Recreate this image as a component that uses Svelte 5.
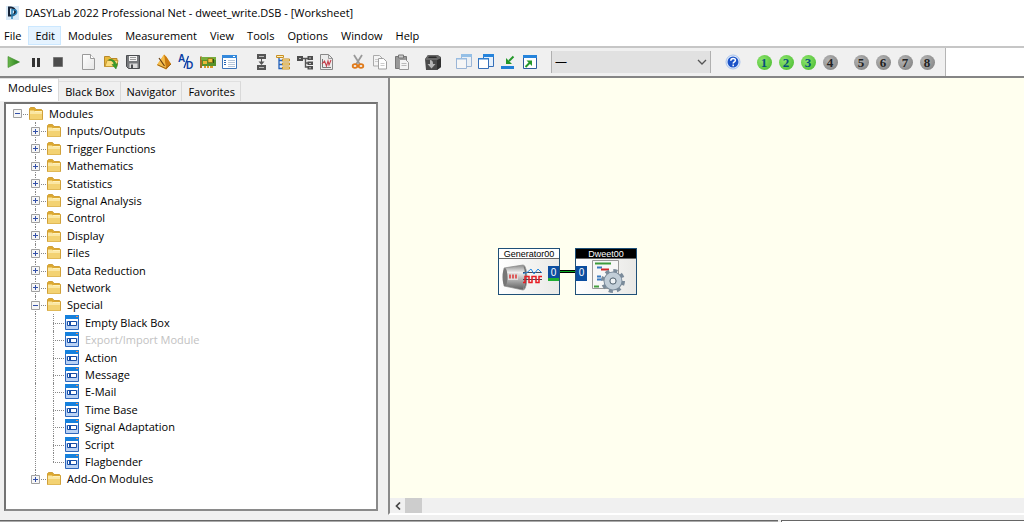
<script>
  const menus = ['File', 'Edit', 'Modules', 'Measurement', 'View', 'Tools', 'Options', 'Window', 'Help'];
  const tabs = ['Modules', 'Black Box', 'Navigator', 'Favorites'];
  const toolGroups = [
    [['play', 'Start'], ['pause', 'Pause'], ['stop', 'Stop']],
    [['new', 'New'], ['open', 'Open'], ['save', 'Save']],
    [['metronome', 'Experiment setup'], ['ad', 'A/D'], ['card', 'Hardware'], ['props', 'Properties']],
    [['flow', 'Flow'], ['outline', 'Outline'], ['network', 'Network'], ['chart', 'Chart']],
    [['cut', 'Cut'], ['copy', 'Copy'], ['paste', 'Paste']],
    [['blackbox', 'Black box']],
    [['windowsPale', 'Hide windows'], ['windows', 'Show windows'], ['minimize', 'Minimize'], ['maximize', 'Maximize']]
  ];
  const layouts = [[1, 2, 3, 4], [5, 6, 7, 8]];
  const used = [1, 2, 3];
  const folder = (label, extra = {}) => ({ label, level: 1, kind: 'folder', sign: '+', ...extra });
  const leaf = (label, extra = {}) => ({ label, level: 2, kind: 'leaf', ...extra });
  const rows = [
    { label: 'Modules', level: 0, kind: 'folder', sign: '-' },
    ...['Inputs/Outputs', 'Trigger Functions', 'Mathematics', 'Statistics', 'Signal Analysis', 'Control', 'Display', 'Files', 'Data Reduction', 'Network'].map((l) => folder(l)),
    folder('Special', { sign: '-' }),
    leaf('Empty Black Box'),
    leaf('Export/Import Module', { disabled: true }),
    ...['Action', 'Message', 'E-Mail', 'Time Base', 'Signal Adaptation', 'Script'].map((l) => leaf(l)),
    leaf('Flagbender', { last: true }),
    folder('Add-On Modules', { last: true })
  ];
  let activeTab = $state('Modules');
</script>

{#snippet icon(name)}
  <svg width="16" height="16" viewBox="0 0 16 16" aria-hidden="true">
    {#if name === 'play'}
      <path d="M2 2.5 13.5 8 2 13.5z" fill="url(#gPlay)" stroke="#3c8a2a" stroke-width=".6" />
    {:else if name === 'pause'}
      <path d="M4 4h3v9H4zM9 4h3v9H9z" fill="#333" />
    {:else if name === 'stop'}
      <path d="M3.500 3.500h9v9h-9z" fill="#4c4c4c" stroke="#777" />
    {:else if name === 'new'}
      <path d="M1.500 .5h8l4 4v11h-12z" fill="url(#gPaper)" stroke="#9a9a9a" />
      <path d="M9.500 .5v4h4" fill="#fff" stroke="#9a9a9a" />
    {:else if name === 'open'}
      <path d="M1.500 12.500V2.500h5l1.500 2h6v8z" fill="#e8b93c" stroke="#b8892a" />
      <path d="M2 12.500 4 6.500h11l-1.500 6z" fill="#fbdc7c" stroke="#c79a35" />
      <path d="M5.500 6c3 0 5 1.500 5.500 4.500H9l4 4.500 1.500-5.500-1.500.7C12.500 7 9.500 4.500 5.500 6z" fill="#3aa02c" stroke="#23781c" stroke-width=".5" />
    {:else if name === 'save'}
      <path d="M1.500 1.500h13v13h-11l-2-2z" fill="#77797c" stroke="#4b4d50" />
      <path d="M4 2h8v5H4z" fill="#f4f4f4" /><path d="M5 3.500h6M5 5.500h6" stroke="#9a9a9a" />
      <path d="M4.500 9.500h8V14h-8z" fill="#dcdcdc" /><path d="M6 10.500h2V14H6z" fill="#4b4d50" />
    {:else if name === 'metronome'}
      <path d="M8 .5 10.500 3 15 10l-5 5.500L1 11z" fill="#f0a92a" /><path d="M8 .5 10.500 3 15 10l-5 5.500z" fill="#c97a10" />
      <path d="M8 1 1 11l9 4z" fill="#f5bd4c" />
      <path d="M3 4l5.500 8" stroke="#6b4010" stroke-width="1.200" /><path d="M1.500 10.800 10 14.500l5-4.500" fill="none" stroke="#9c6214" />
    {:else if name === 'ad'}
      <text x="0" y="8" class="glyph-ad">A</text>
      <path d="M10.500 2 6 14" stroke="#0b3fa5" stroke-width="1.300" />
      <text x="8" y="15" class="glyph-ad">D</text>
    {:else if name === 'card'}
      <path d="M1 3h15v9H1z" fill="#58922a" /><path d="M0 2.500h2V14H0z" fill="#a46d25" />
      <path d="M1 3h15v3H1z" fill="#77ad3c" /><path d="M8 4.500h4.500v4H8z" fill="#f0c341" stroke="#84610f" stroke-width=".7" />
      <path d="M3 7h4v3H3z" fill="#e8b837" /><path d="M4 12h2v2H4zM7 12h2v2H7zM10 12h3v2h-3z" fill="#d79b25" /><path d="M13.500 5v4" stroke="#285512" />
    {:else if name === 'props'}
      <path d="M.5 1.500h14v13H.5z" fill="#fff" stroke="#3b73b8" /><path d="M0 1h15v3H0z" fill="#3489dc" />
      <path d="M2 6.500h2M2 8.500h2M2 10.500h2" stroke="#2566b5" /><path d="M6 6.500h7M6 8.500h7M6 10.500h7M6 12.500h7" stroke="#b6c6d9" />
      <path d="M11 2.500h2" stroke="#fff" />
    {:else if name === 'flow'}
      <path d="M4 0h9v5H4zM4 11h9v5H4z" fill="#555" /><path d="M6 2.500h5M6 13.500h5" stroke="#bbb" /><path d="M8.500 5v4" stroke="#555" /><path d="M5.500 7.500 8.500 11l3-3.500z" fill="#555" />
    {:else if name === 'outline'}
      <path d="M4 4v10.500h4M4 6.500h4M4 10.500h4" fill="none" stroke="#2261ba" stroke-width="1.300" />
      <path d="M1.500 1.500h7v2h-7zM7.500 5h7v2h-7zM7.500 9h7v2h-7zM7.500 13h7v2h-7z" fill="#fff1bc" stroke="#c88f22" />
    {:else if name === 'network'}
      <path d="M4 4.500h8M8.500 4.500v8.500H12M8.500 9H12" fill="none" stroke="#555" stroke-width="1.400" />
      <path d="M0 2h6v5H0zM10.500 2h5.500v4h-5.500zM10.500 7.500h5.500v3.500h-5.500zM10.500 12h5.500v3.500h-5.500z" fill="#4d4d4d" /><path d="M2 4.500h2M12 4h2M12 9.500h2M12 13.800h2" stroke="#bbb" />
    {:else if name === 'chart'}
      <path d="M1.500 .5h8l4 4v11h-12z" fill="#ececec" stroke="#888" /><path d="M9.500 .5v4h4" fill="none" stroke="#999" />
      <path d="M3.500 5v8.500H12" fill="none" stroke="#777" /><path d="M3 10l2.500-3 2 5L9 7l1 4 2-5" fill="none" stroke="#c6404c" stroke-width="1.100" />
    {:else if name === 'cut'}
      <path d="M4 1 10 10.500M12 1 6 10.500" stroke="#999" stroke-width="1.800" />
      <ellipse cx="5" cy="12" rx="2.300" ry="1.800" fill="none" stroke="#e07a1a" stroke-width="1.800" /><ellipse cx="11" cy="12" rx="2.300" ry="1.800" fill="none" stroke="#e07a1a" stroke-width="1.800" />
    {:else if name === 'copy'}
      <path d="M1.500 1.500h6l3 3v7.500h-9z" fill="#f4f4f4" stroke="#aaa" /><path d="M6.500 4.500h5l3 3V15h-8z" fill="#fff" stroke="#a0a0a0" />
      <path d="M3 5.500h3M3 7.500h3M8.500 9.500h4M8.500 11.500h4" stroke="#ccc" />
    {:else if name === 'paste'}
      <path d="M1.500 2.500h11v12h-11z" fill="#989898" stroke="#777" /><path d="M4.500 1h5v3h-5z" fill="#ccc" stroke="#777" />
      <path d="M5.500 5.500h6l3 3v7h-9z" fill="#f4f4f4" stroke="#999" /><path d="M7.500 9.500h5M7.500 11.500h5" stroke="#bbb" />
    {:else if name === 'blackbox'}
      <path d="M0 5 3 1h9l4 2v10l-4 3H1z" fill="#4a4a4a" /><path d="M12 6l4-2v9l-4 3z" fill="#303030" /><path d="M0 6h12l4-2-3-3H3z" fill="#686868" /><path d="M4 2.500h7l1 1.500H3z" fill="#2d2d2d" />
      <path d="M5 6c2 0 3 1 3 4h2.500l-4 4.500-4-4.500H5z" fill="#b5b5b5" />
    {:else if name === 'windowsPale'}
      <g opacity=".45">{@render windows()}</g>
    {:else if name === 'windows'}
      {@render windows()}
    {:else if name === 'minimize'}
      <path d="M1 12h13v3H1z" fill="#217fd6" /><path d="M13.500 2.500 9 7" stroke="#24982a" stroke-width="2" /><path d="M6 4v6h6z" fill="#24982a" />
    {:else if name === 'maximize'}
      <path d="M1.500 1.500h13v13h-13z" fill="#fff" stroke="#2d5d9d" /><path d="M1 1h14v3H1z" fill="#2684dc" />
      <path d="M3.500 13 8 8.500" stroke="#24982a" stroke-width="2" /><path d="M4.500 6.500H10v5.500z" fill="#24982a" />
    {:else if name === 'help'}
      <circle cx="8" cy="8" r="7" fill="#e3edfb" stroke="#a9c3ec" /><circle cx="8" cy="8" r="5.500" fill="#1b53c8" />
      <path d="M5.800 6.800c0-3 4.600-3 4.600-.5 0 1.600-2.200 1.500-2.200 3.200M8.200 10.500v1.700" fill="none" stroke="#fff" stroke-width="1.500" />
    {:else if name === 'folder'}
      <path d="M1.500 13.500v-11l1-1h4l1.500 2h5.500l1 1v9z" fill="#dda92f" stroke="#d0a03a" />
      <path d="M2 4.500h4l1.500 1.500H14v7H2z" fill="#fbe7a3" /><path d="M2 8h12v5.500H2z" fill="#f3d272" /><path d="M7 5.500h7" stroke="#fff1bb" />
    {:else}
      <path d="M1.500 .5h13v14h-13z" fill="#b9d2f5" stroke="#2d66bb" /><path d="M1 0h14v4H1z" fill="#1681dd" /><path d="M12 1.500h2" stroke="#e98a5b" />
      <path d="M2 4h12v2H2z" fill="#fff" /><path d="M3.500 6.500h9v4h-9z" fill="#fff" stroke="#174ea6" /><path d="M5 7h2v3H5z" fill="#174ea6" />
    {/if}
  </svg>
{/snippet}

{#snippet windows()}
  <path d="M5.500 .5h10v12h-10z" fill="#e6f1fc" stroke="#356fb8" /><path d="M5 0h11v3H5z" fill="#2684dc" />
  <path d="M.5 4.500h10v10H.5z" fill="#fff" stroke="#356fb8" /><path d="M0 4h11v1.500H0z" fill="#2f7fd0" />
{/snippet}

<svg class="defs" width="0" height="0" aria-hidden="true">
  <defs>
    <linearGradient id="gPlay"><stop stop-color="#6cb84e" /><stop offset="1" stop-color="#25801a" /></linearGradient>
    <linearGradient id="gPaper" x2="1" y2="1"><stop stop-color="#fff" /><stop offset="1" stop-color="#e6e6e6" /></linearGradient>
    <linearGradient id="gMetal" x2="0" y2="1"><stop stop-color="#8a8a8a" /><stop offset=".3" stop-color="#eee" /><stop offset="1" stop-color="#5c5c5c" /></linearGradient>
  </defs>
</svg>

<div class="app">
  <header class="title">
    <svg width="13" height="14" viewBox="0 0 13 14" aria-hidden="true">
      <path d="M0 0h13v14H0z" fill="#d8e9f7" /><path d="M3 1.500h2c5 0 6 8 0 8H3z" fill="none" stroke="#162438" stroke-width="2" /><path d="M6 3v10M6 4c6-2 6 5 1 5" fill="none" stroke="#2a82b8" stroke-width="1.500" />
    </svg>
    <h1>DASYLab 2022 Professional Net - dweet_write.DSB - [Worksheet]</h1>
  </header>

  <nav class="menu">
    {#each menus as m}
      <button class:hot={m === 'Edit'}>{m}</button>
    {/each}
  </nav>

  <div class="toolbar-row">
    <div class="toolbar">
      {#each toolGroups as group}
        <div class="group">
          {#each group as [name, label]}
            <button aria-label={label}>{@render icon(name)}</button>
          {/each}
        </div>
      {/each}
      <select aria-label="Layout"><option>—</option></select>
      <div class="group"><button aria-label="Help">{@render icon('help')}</button></div>
      {#each layouts as group}
        <div class="group">
          {#each group as n}
            <button><span class="ball" class:used={used.includes(n)}>{n}</span></button>
          {/each}
        </div>
      {/each}
    </div>
  </div>

  <main>
    <aside>
      <div class="tabs" role="tablist">
        {#each tabs as t}
          <button role="tab" aria-selected={t === activeTab} class:active={t === activeTab} onclick={() => (activeTab = t)}>{t}</button>
        {/each}
      </div>
      <div class="tree-box">
        <ul class="tree" role="tree">
          {#each rows as r}
            <li role="treeitem" aria-selected="false" aria-level={r.level + 1} class="level{r.level}" class:disabled={r.disabled} class:last={r.last}>
              {#if r.level === 2}<span class="rail"></span>{/if}
              <span class="branch">
                {#if r.sign}
                  <svg width="9" height="9" viewBox="0 0 9 9" aria-hidden="true">
                    <path d="M.5 .5h8v8h-8z" fill="#f6f6f6" stroke="#a0a0a0" /><path d={r.sign === '+' ? 'M2 4.500h5M4.500 2v5' : 'M2 4.500h5'} stroke="#3350a8" />
                  </svg>
                {/if}
              </span>
              {@render icon(r.kind)}
              <span class="label">{r.label}</span>
            </li>
          {/each}
        </ul>
      </div>
    </aside>

    <section class="sheet">
      <div class="canvas">
        <div class="module generator">
          <h2>Generator00</h2>
          <svg class="art" width="44" height="34" viewBox="0 0 44 34" aria-hidden="true">
            <path d="M3 8 22 5c5 0 5 25 0 25L3 26z" fill="url(#gMetal)" stroke="#888" stroke-width=".7" />
            <ellipse cx="4" cy="17" rx="2.500" ry="9" fill="#777" /><path d="M22 5c5 2 5 23 0 25 3-7 3-18 0-25z" fill="#4d4d4d" stroke="#aaa" stroke-width=".6" />
            <path d="M7 13h10v7H7z" fill="#ddd" /><path d="M9 14.500v4M12 14.500v4M15 14.500v4" stroke="#d33" stroke-width="1.500" />
            <path d="M22 12.500h19" stroke="#445" /><path d="M22 13.500l4-1 4-3.500 3 5 4-5 4 4" fill="none" stroke="#2689e0" />
            <path d="M22 19.500h19" stroke="#445" /><path d="M22 22.500h2v-6h4v6h3v-6h4v6h3v-6h3" fill="none" stroke="#e81c23" stroke-width="1.500" />
          </svg>
          <span class="port out">0</span>
        </div>
        <span class="wire"></span>
        <div class="module dweet">
          <h2>Dweet00</h2>
          <span class="port in">0</span>
          <svg class="art" width="36" height="36" viewBox="0 0 36 36" aria-hidden="true">
            <path d="M3.500 2.500h26v28h-26z" fill="#f7f7f7" stroke="#999" />
            <path d="M6 5.500h16" stroke="#3c9b3b" stroke-width="2" /><path d="M8 9.500h5M8 18.500h4M8 21.500h5" stroke="#3a7bc0" stroke-width="2" /><path d="M12 11.500h8" stroke="#d02828" stroke-width="2" /><path d="M5 28.500h5" stroke="#46a040" stroke-width="2" />
            <circle cx="24" cy="23" r="10" fill="none" stroke="#7b8b9a" stroke-width="4" stroke-dasharray="4 3.850" />
            <circle cx="24" cy="23" r="6" fill="none" stroke="#7b8b9a" stroke-width="7" /><circle cx="24" cy="23" r="6" fill="none" stroke="#c2ced8" stroke-width="5" /><circle cx="24" cy="23" r="3" fill="#f0f3f6" stroke="#667580" />
          </svg>
        </div>
      </div>
      <div class="scroll">
        <button aria-label="Scroll left"><svg width="6" height="8" viewBox="0 0 6 8" aria-hidden="true"><path d="M5 .5 1.500 4 5 7.500" fill="none" stroke="#444" stroke-width="1.700" /></svg></button>
        <span class="thumb"></span>
      </div>
    </section>
  </main>
  <footer><span class="status-main"></span><span class="status-side"></span></footer>
</div>

<style>
  :global(body) { margin: 0; }
  * { box-sizing: border-box; }
  .defs { position: absolute; }
  .app { height: 100vh; display: flex; flex-direction: column; background: #f0f0f0; color: #000; font: 12px/16px "Open Sans", "Noto Sans", sans-serif; }
  button { font: inherit; color: inherit; border: 0; background: none; padding: 0; }
  .title { display: flex; align-items: center; gap: 6px; height: 26px; padding: 0 6px; background: #fff; }
  h1, h2 { margin: 0; font-weight: 400; font-size: 11px; }
  .menu { display: flex; background: #fff; height: 20px; font-size: 11px; padding-bottom: 1px; }
  .menu button { padding: 0 5px 0 6px; border: 1px solid transparent; }
  .menu button:first-child { padding: 0 6px 0 3px; }
  .menu button.hot { background: #e5f3ff; border-color: #cce8ff; }
  .toolbar-row { background: #fff; border-top: 2px solid #c6c6c6; border-bottom: 2px solid #858585; }
  .toolbar { display: flex; align-items: center; width: fit-content; height: 28px; background: #f0f0f0; padding: 0 7px 0 3px; border-right: 1px solid #b5b5b5; gap: 9px; }
  .group { display: flex; }
  .group button { width: 22px; height: 22px; display: grid; place-items: center; }
  .toolbar select { width: 160px; height: 22px; margin: 0 2px 0 1px; padding: 0 0 0 3px; border: solid #b0b0b0; border-width: 0 1px; border-radius: 0; color: #000; font: inherit; appearance: none; background: #e1e1e1 url("data:image/svg+xml,%3Csvg xmlns='http://www.w3.org/2000/svg' width='10' height='6'%3E%3Cpath d='M1 1l4 4 4-4' fill='none' stroke='%23555' stroke-width='1.3'/%3E%3C/svg%3E") no-repeat right 3px center; }
  .ball { width: 15px; height: 15px; border-radius: 50%; display: grid; place-items: center; font: bold 13px/15px "Liberation Serif", serif; color: #222; background: radial-gradient(circle at 35% 35%, #b5b5b5, #7b7b7b); }
  .ball.used { color: #06507c; background: radial-gradient(circle at 35% 35%, #8ce56c, #46b82c); }
  .glyph-ad { font: bold 10px "Liberation Sans", sans-serif; fill: #0b3fa5; }
  main { flex: 1; display: flex; min-height: 0; }
  aside { flex: none; width: 388px; display: flex; flex-direction: column; padding: 0 10px 9px 4px; }
  .tabs { display: flex; align-items: flex-end; font-size: 11px; margin-left: -4px; height: 24px; padding-bottom: 1px; }
  .tabs button { height: 20px; padding: 0 5px 0 6px; border-right: 1px solid #d9d9d9; border-top: 1px solid #e0e0e0; }
  .tabs button.active { height: 23px; padding: 0 6px 4px 8px; background: #fff; }
  .tree-box { flex: 1; min-height: 0; background: #fff; border: 2px solid #7b7b7b; border-color: #737373 #8a8a8a #8a8a8a #737373; overflow: hidden; }
  .tree { list-style: none; margin: 0; padding: 1px 0 0 7px; font-size: 11px; }
  .tree li { display: flex; align-items: center; height: 17px; }
  .tree li:nth-child(5n + 2), .tree li:nth-child(5n + 4) { height: 18px; }
  .tree svg { flex: none; }
  .level1, .level2 { padding-left: 18px; }
  .branch { position: relative; width: 15px; align-self: stretch; display: flex; align-items: center; }
  .branch svg { position: relative; z-index: 1; }
  .branch::before { content: ""; position: absolute; left: 4px; right: 0; top: 50%; border-top: 1px dotted #888; }
  .level1 .branch::after, .level2 .branch::after, .rail { border-left: 1px dotted #888; }
  .level1 .branch::after, .level2 .branch::after { content: ""; position: absolute; left: 4px; top: 0; bottom: 0; }
  .last .branch::after { bottom: 50%; }
  .rail { width: 14px; margin-left: 4px; align-self: stretch; }
  .label { padding-left: 5px; white-space: nowrap; }
  .disabled .label { color: #c2c2c2; }
  .sheet { flex: 1; display: flex; flex-direction: column; min-width: 0; border-left: 2px solid #8a8a8a; margin-bottom: 5px; border-bottom: 2px solid #fff; }
  .canvas { flex: 1; position: relative; background: #ffffef; overflow: hidden; }
  .module { position: absolute; top: 170px; width: 62px; height: 47px; border: 1px solid #1f5078; background: linear-gradient(90deg, #fff, #e9e9e6); }
  .generator { left: 108px; }
  .dweet { left: 185px; }
  .module h2 { height: 10px; font: 9px/10px "Liberation Sans", sans-serif; text-align: center; background: #fff; color: #000; border-bottom: 1px solid #666; }
  .dweet h2 { background: #000; color: #fff; }
  .art { position: absolute; left: 2px; top: 11px; }
  .dweet .art { left: 13px; top: 9px; }
  .port { position: absolute; top: 17px; width: 11px; height: 15px; background: #0b4da0; color: #fff; font: 10px/13px "Liberation Sans", sans-serif; text-align: center; }
  .out { right: 0; border-bottom: 3px solid #1fae32; }
  .in { left: 0; }
  .wire { position: absolute; left: 170px; top: 192px; width: 15px; height: 3px; background: #08a820; border: solid #000; border-width: 1px 0; }
  .scroll { height: 15px; display: flex; background: #f0f0f0; }
  .scroll button { width: 15px; display: grid; place-items: center; }
  .thumb { width: 17px; background: #cdcdcd; }
  footer { display: flex; gap: 3px; height: 2px; }
  .status-main { width: 76%; border-top: 1px solid #666; background: #aaa; }
  .status-side { flex: 1; border: solid #666; border-width: 1px 0 0 1px; background: #fff; }
</style>
